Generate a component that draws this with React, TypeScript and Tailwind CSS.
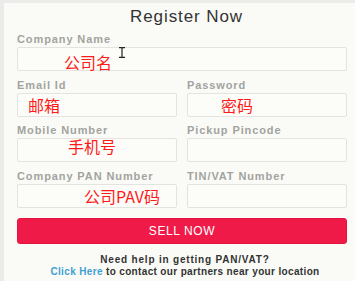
import type { FC, ReactNode } from "react";

const latin = { fontFamily: '"Liberation Sans", Arial, sans-serif' };
const cjk = { fontFamily: '"Noto Sans CJK SC", "Noto Sans", sans-serif' };

interface FieldProps {
  label: string;
  note?: string;
  noteClass?: string;
  children?: ReactNode;
}

// One label + box. The red note is the hand-written annotation sitting in the box.
const Field: FC<FieldProps> = ({ label, note, noteClass = "", children }) => (
  <div className="flex min-w-0 flex-1 flex-col">
    <span className="h-[15px] text-[11px] font-bold leading-[15px] tracking-[0.9px] text-[#a2a3a0]">
      {label}
    </span>
    <div className="relative flex h-[24px] items-center rounded-[2px] border border-[#e3e4df] bg-[#fcfdf9]">
      {note && (
        <span style={cjk} className={`text-[16px] leading-none text-[#ff1a1a] ${noteClass}`}>
          {note}
        </span>
      )}
      {children}
    </div>
  </div>
);

const TextCursor: FC = () => (
  <svg
    className="absolute left-[100px] top-[-1px]"
    width="8"
    height="11"
    viewBox="0 0 8 11"
    fill="none"
    stroke="#222"
    strokeWidth="1.2"
  >
    <path d="M1 0.6h2.2c0.5 0 0.8 0.3 0.8 0.8v8.2c0 0.5-0.3 0.8-0.8 0.8H1M7 0.6H4.8c-0.5 0-0.8 0.3-0.8 0.8v8.2c0 0.5 0.3 0.8 0.8 0.8H7" />
  </svg>
);

export default function App() {
  return (
    <div style={latin} className="h-[281px] w-[355px] overflow-hidden bg-[#ebebe9] pl-[4px] pt-[3px]">
      <div className="flex h-full flex-col bg-[#fafbf7] pl-[13px] pr-[8px]">
        <h1 className="h-[29px] pl-[9px] text-center text-[17px] leading-[27px] tracking-[0.9px] text-[#333]">
          Register Now
        </h1>

        <div className="flex flex-col gap-[6.5px]">
          <Field label="Company Name" note="公司名" noteClass="ml-[46px] mt-[6px]">
            <TextCursor />
          </Field>
          <div className="flex gap-[10px]">
            <Field label="Email Id" note="邮箱" noteClass="ml-[10px]" />
            <Field label="Password" note="密码" noteClass="ml-[33px]" />
          </div>
          <div className="flex gap-[10px]">
            <Field label="Mobile Number" note="手机号" noteClass="ml-[50px] mb-[8px]" />
            <Field label="Pickup Pincode" />
          </div>
          <div className="flex gap-[10px]">
            <Field label="Company PAN Number" note="公司PAV码" noteClass="ml-[66px]" />
            <Field label="TIN/VAT Number" />
          </div>
        </div>

        <button
          type="button"
          className="mt-[10px] h-[26px] rounded-[3px] border border-[#e0143f] bg-[#f01a48] text-[12px] tracking-[0.6px] text-white"
        >
          SELL NOW
        </button>

        <div className="mt-[10px] flex flex-col items-center pl-[6px] text-[10px] font-bold leading-[12px] text-[#333]">
          <p className="tracking-[0.8px]">Need help in getting PAN/VAT?</p>
          <p className="tracking-[0.35px]">
            <span className="text-[#3e9fd2]">Click Here</span> to contact our partners near your location
          </p>
        </div>
      </div>
    </div>
  );
}
